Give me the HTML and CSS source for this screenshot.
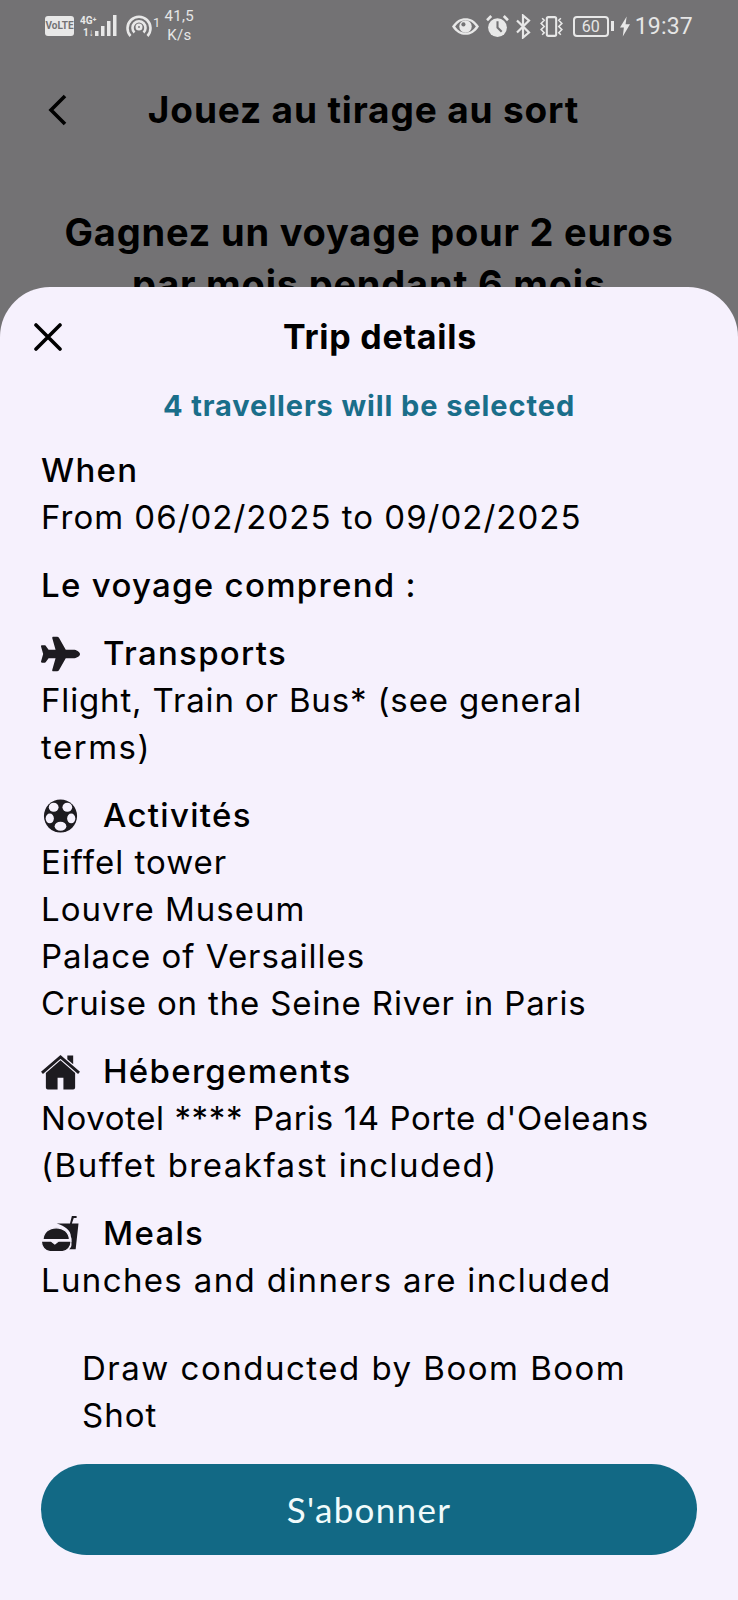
FILE: index.html
```html
<!DOCTYPE html>
<html lang="fr">
<head>
<meta charset="utf-8">
<title>Trip details</title>
<link rel="stylesheet" href="styles.css">
</head>
<body>
<div class="screen">
  <div class="status">
    <div class="status-group">
      <span class="volte">VoLTE</span>
      <svg class="ic-signal" viewBox="0 0 38 24"><text x="0" y="10" class="net">4G⁺</text><text x="3" y="22" class="net">1↓</text><rect x="15" y="17" width="3.500" height="5" fill="#e8e8e8"/><rect x="21" y="12" width="3.500" height="10" fill="#e8e8e8"/><rect x="27" y="7" width="3.500" height="15" fill="#e8e8e8"/><rect x="33" y="1" width="3.500" height="21" fill="#e8e8e8"/></svg>
      <svg class="ic-hotspot" viewBox="0 0 26 24" fill="none" stroke="#e8e8e8" stroke-width="2.600"><path d="M4.500 22a11.500 11.500 0 1 1 17 0"/><path d="M8.500 18.500a6.500 6.500 0 1 1 9 0"/><circle cx="13" cy="13" r="2.200"/></svg>
      <span class="sup">1</span>
      <span class="speed">41,5<br>K/s</span>
    </div>
    <div class="status-group right">
      <svg class="ic-eye" viewBox="0 0 26 16"><path d="M0 8C4 2 8 0 13 0s9 2 13 8c-4 6-8 8-13 8S4 14 0 8z" fill="#e8e8e8"/><path d="M3 8c3-4 6-6 10-6s7 2 10 6c-3 4-6 6-10 6S6 12 3 8z" fill="#737274"/><circle cx="13" cy="8" r="6" fill="#e8e8e8"/><circle cx="11" cy="6" r="2" fill="#737274"/></svg>
      <svg class="ic-alarm" viewBox="0 0 22 22"><circle cx="11" cy="12" r="9" fill="#e8e8e8"/><path d="M11 6v6l4 4" stroke="#737274" stroke-width="2" fill="none"/><path d="M1 5l4-4M21 5l-4-4" stroke="#e8e8e8" stroke-width="2.500"/></svg>
      <svg class="ic-bt" viewBox="0 0 16 24" fill="none" stroke="#e8e8e8" stroke-width="2.200"><path d="M2 6l12 12-6 5V1l6 5L2 18"/></svg>
      <svg class="ic-vib" viewBox="0 0 26 20" fill="none" stroke="#e8e8e8" stroke-width="2"><rect x="8.500" y="1" width="9" height="18" rx="1.500"/><path d="M4 2l2 2-3 3 3 3-3 3 3 3-2 2M22 2l-2 2 3 3-3 3 3 3-3 3 2 2" stroke-width="1.500"/></svg>
      <span class="battery">60</span>
      <span class="nub"></span>
      <svg class="ic-bolt" viewBox="0 0 9 18"><path d="M6 0L0 10h3.500L2.500 18 9 7H5z" fill="#e8e8e8"/></svg>
      <span class="clock">19:37</span>
    </div>
  </div>

  <div class="appbar">
    <svg class="back" viewBox="0 0 20 32" fill="none" stroke="#000" stroke-width="3.600"><path d="M17 2L3 16l14 14"/></svg>
    <h1 class="page-title">Jouez au tirage au sort</h1>
  </div>
  <h2 class="headline">Gagnez un voyage pour 2 euros<br>par mois pendant 6 mois</h2>

  <div class="sheet">
    <div class="sheet-head">
      <svg class="close" viewBox="0 0 28 28" fill="none" stroke="#000" stroke-width="3.600" stroke-linecap="round"><path d="M2 2l24 24M26 2L2 26"/></svg>
      <div class="sheet-title">Trip details</div>
    </div>
    <div class="selected">4 travellers will be selected</div>
    <div class="content">
      <section>
        <div class="label">When</div>
        <div>From 06/02/2025 to 09/02/2025</div>
      </section>
      <section>
        <div class="label">Le voyage comprend :</div>
      </section>
      <section>
        <div class="label with-icon">
          <svg class="icon" viewBox="0 0 576 512"><path fill="#1d1b20" d="M482.300 192c34.200 0 93.700 29 93.700 64c0 36-59.500 64-93.700 64l-116.600 0L265.200 495.900c-5.700 10-16.300 16.100-27.800 16.100l-56.200 0c-10.600 0-18.300-10.200-15.400-20.400l49-171.600L112 320 68.800 377.600c-3 4-7.800 6.400-12.800 6.400l-42 0c-7.800 0-14-6.300-14-14c0-1.300 .2-2.600 .5-3.900L32 256 .5 145.900c-.4-1.300-.5-2.600-.5-3.900c0-7.800 6.300-14 14-14l42 0c5 0 9.800 2.400 12.800 6.400L112 192l102.900 0-49-171.600C162.900 10.200 170.600 0 181.200 0l56.200 0c11.500 0 22.100 6.200 27.800 16.100L365.700 192l116.600 0z"/></svg>
          Transports
        </div>
        <div class="snug">Flight, Train or Bus* (see general</div>
        <div class="wide">terms)</div>
      </section>
      <section>
        <div class="label with-icon">
          <svg class="icon" viewBox="-3 -1 40 36"><circle cx="17" cy="17" r="17" fill="#1d1b20"/><g fill="#f6f1fd"><ellipse cx="10" cy="8" rx="5" ry="4.600"/><ellipse cx="24" cy="8" rx="5" ry="4.600"/><ellipse cx="6" cy="19.500" rx="4.200" ry="5"/><ellipse cx="28" cy="19.500" rx="4.200" ry="5"/><ellipse cx="17" cy="27.500" rx="6" ry="4.600"/></g></svg>
          Activités
        </div>
        <div>Eiffel tower</div>
        <div>Louvre Museum</div>
        <div>Palace of Versailles</div>
        <div class="snug">Cruise on the Seine River in Paris</div>
      </section>
      <section>
        <div class="label with-icon">
          <svg class="icon" viewBox="0 0 40 36"><path fill="#1d1b20" d="M27 1h6v9l-6-5zM20 6L5 19v15a2 2 0 0 0 2 2h10V24h6v12h10a2 2 0 0 0 2-2V19z"/><path d="M1 19L20 2.500l19 16.500" fill="none" stroke="#1d1b20" stroke-width="3"/></svg>
          Hébergements
        </div>
        <div class="tight">Novotel **** Paris 14 Porte d'Oeleans</div>
        <div class="wide">(Buffet breakfast included)</div>
      </section>
      <section>
        <div class="label with-icon">
          <svg class="icon" viewBox="0 0 40 38"><path fill="#1d1b20" d="M16 8h23l-3 27h-7c3-2 3-5 2-7 1-2 1-4 0-6 0-7-6-11-15-14zM30 8l2-8h5v2h-3l-2 6z"/><g fill="#1d1b20" stroke="#f6f1fd" stroke-width="1.200"><path d="M1.500 25C2 17 8 12.500 15.500 12.500S29 17 29.500 25z"/><path d="M0 26.500h10l4 3 4-3h13c.5 6-4 11-9 11H9c-5 0-9.500-5-9-11z"/></g></svg>
          Meals
        </div>
        <div class="roomy">Lunches and dinners are included</div>
      </section>
    </div>
    <div class="draw"><div class="wide">Draw conducted by Boom Boom</div><div>Shot</div></div>
    <button class="cta">S'abonner</button>
  </div>
</div>
</body>
</html>
```
FILE: styles.css
```css
* { box-sizing: border-box; margin: 0; padding: 0; }
html, body { width: 738px; height: 1600px; overflow: hidden; }
body { font-family: "Inter", "Liberation Sans", sans-serif; color: #000; }
.screen { position: relative; width: 738px; height: 1600px; background: #737274; overflow: hidden; }

.status { height: 52px; display: flex; justify-content: space-between; align-items: center; padding: 0 45px 0 45px; color: #e6e6e6; }
.status-group { display: flex; align-items: center; }
.volte { width: 29px; height: 20px; background: #e8e8e8; color: #737274; border-radius: 3px; font: 700 10px/20px "Roboto", sans-serif; text-align: center; }
.ic-signal { width: 38px; height: 24px; margin-left: 6px; }
.net { font: 700 10px "Roboto", sans-serif; fill: #e8e8e8; }
.ic-hotspot { width: 26px; height: 24px; margin-left: 8px; }
.sup { font: 400 13px/1 "Roboto", sans-serif; margin: -8px 0 0 1px; }
.speed { font: 400 15px/19px "Roboto", sans-serif; text-align: center; margin-left: 3px; width: 32px; letter-spacing: 0.3px; }
.ic-eye { width: 27px; height: 17px; }
.ic-alarm { width: 23px; height: 23px; margin-left: 7px; }
.ic-bt { width: 16px; height: 25px; margin-left: 6px; }
.ic-vib { width: 27px; height: 21px; margin-left: 7px; }
.battery { width: 36px; height: 21px; margin-left: 8px; border: 2px solid #e8e8e8; border-radius: 4px; font: 400 16px/17px "Roboto", sans-serif; text-align: center; }
.nub { width: 3px; height: 10px; margin-left: 2px; background: #e8e8e8; }
.ic-bolt { width: 10px; height: 21px; margin-left: 6px; }
.clock { font: 400 23px/1 "Roboto", sans-serif; margin-left: 5px; letter-spacing: 0.2px; }

.appbar { position: relative; height: 116px; display: flex; align-items: center; justify-content: center; }
.back { position: absolute; left: 47px; top: 42px; width: 22px; height: 32px; }
.page-title { font-size: 37px; line-height: 1; font-weight: 700; letter-spacing: 0.85px; margin-left: -11px; margin-top: -1px; }
.headline { margin-top: 38px; font-size: 38px; line-height: 52px; font-weight: 700; text-align: center; letter-spacing: 0.8px; }

.sheet { position: absolute; left: 0; top: 287px; width: 738px; height: 1313px; background: #f6f1fd; border-radius: 50px 50px 0 0; display: flex; flex-direction: column; padding: 0 41px; font-size: 33px; line-height: 47px; letter-spacing: 1px; }
.sheet-head { position: relative; height: 100px; display: flex; align-items: center; justify-content: center; }
.close { position: absolute; left: -7px; top: 36px; width: 28px; height: 28px; }
.sheet-title { font-size: 34px; font-weight: 700; letter-spacing: 0.75px; margin-left: 22px; margin-top: -2px; }
.selected { height: 38px; text-align: center; color: #1a6e8a; font-size: 29px; line-height: 38px; font-weight: 700; letter-spacing: 0.9px; }
.content { display: flex; flex-direction: column; gap: 21px; margin-top: 22px; }
.label { font-weight: 500; letter-spacing: 1.3px; }
.with-icon { display: flex; align-items: center; gap: 23px; }
.icon { width: 39px; height: 36px; flex: none; }
.tight { letter-spacing: 0.6px; }
.snug { letter-spacing: 0.85px; }
.roomy { letter-spacing: 1.35px; }
.wide { letter-spacing: 1.5px; }
.draw { margin: 41px 0 0 41px; }
.cta { margin-top: 24.500px; width: 656px; height: 91px; border: 0; border-radius: 46px; background: #126985; color: #f0fbfb; font-family: "Lato", sans-serif; font-size: 35px; font-weight: 400; letter-spacing: 1.3px; }
```
